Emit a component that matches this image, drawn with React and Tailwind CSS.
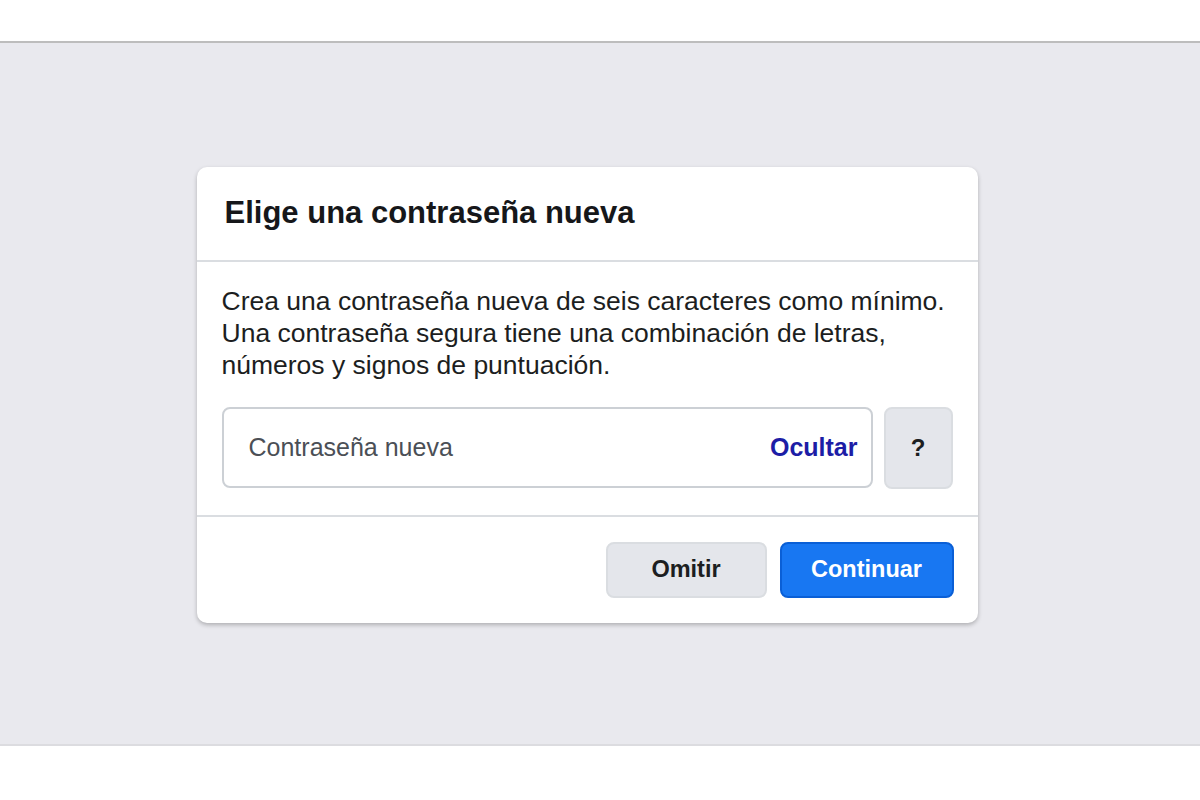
export default function App() {
  return (
    <div className="w-[1200px] h-[800px] flex flex-col bg-white" style={{ fontFamily: '"Liberation Sans", Arial, sans-serif' }}>
      {/* top bar */}
      <div className="h-[43px] bg-white border-b-2 border-[#bdbdbd]" />

      {/* gray stage */}
      <div className="h-[703px] bg-[#e9e9ee] border-b-2 border-[#dcdce0] flex justify-center pt-[124px]">
        <div className="mr-[26px] w-[781px] h-[456px] bg-white rounded-[10px] shadow-[0_2px_4px_rgba(0,0,0,0.25)] flex flex-col">
          {/* header */}
          <div className="h-[95px] border-b-2 border-[#dadde1] flex items-center pl-[28px]">
            <h2 className="text-[31px] font-bold text-[#16171a]">Elige una contraseña nueva</h2>
          </div>

          {/* body */}
          <div className="px-[25px] pt-[23px] pb-[26px] border-b-2 border-[#dadde1]">
            <p className="text-[26.5px] leading-[32px] text-[#1c1e21] whitespace-nowrap">
              Crea una contraseña nueva de seis caracteres como mínimo.
              <br />
              Una contraseña segura tiene una combinación de letras,
              <br />
              números y signos de puntuación.
            </p>
            <div className="mt-[26px] flex gap-[11px]">
              <div className="flex-1 h-[81px] rounded-[8px] border-2 border-[#ccd0d5] flex items-center justify-between pl-[25px] pr-[13px]">
                <span className="text-[25px] text-[#4b4f56]">Contraseña nueva</span>
                <span className="text-[25px] font-bold text-[#1d1da6]">Ocultar</span>
              </div>
              <button className="w-[69px] h-[82px] rounded-[8px] bg-[#e4e6eb] border-2 border-[#dadde1] text-[24px] font-bold text-[#1c1e21]">
                ?
              </button>
            </div>
          </div>

          {/* footer */}
          <div className="flex-1 flex items-center justify-end gap-[13px] pr-[24px]">
            <button className="w-[161px] h-[56px] rounded-[8px] bg-[#e4e6eb] border-2 border-[#dadde1] text-[23.5px] font-bold text-[#1c1e21]">
              Omitir
            </button>
            <button className="w-[174px] h-[56px] rounded-[8px] bg-[#1877f2] border-2 border-[#0a5fd6] text-[23.5px] font-bold text-white">
              Continuar
            </button>
          </div>
        </div>
      </div>

      <div className="flex-1 bg-white" />
    </div>
  );
}
